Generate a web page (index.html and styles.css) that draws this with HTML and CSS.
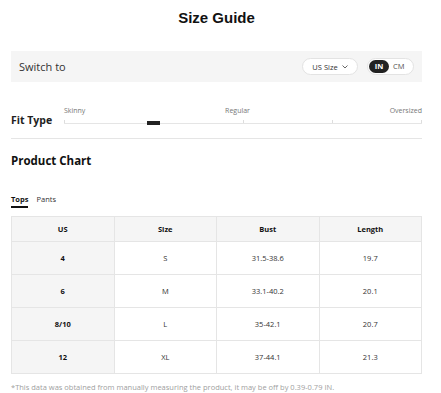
FILE: index.html
```html
<!DOCTYPE html>
<html>
<head>
<meta charset="utf-8">
<link rel="stylesheet" href="styles.css">
</head>
<body>
<div class="page">
  <h1 class="title">Size Guide</h1>
  <div class="switch-bar">
    <span class="switch-label">Switch to</span>
    <div class="switch-controls">
      <div class="select-pill">US Size
        <svg class="chev" width="6" height="4" viewBox="0 0 6 4"><polyline points="0.5,0.5 3,3 5.5,0.5" fill="none" stroke="#555" stroke-width="0.9"/></svg>
      </div>
      <div class="unit-toggle">
        <span class="unit active">IN</span>
        <span class="unit">CM</span>
      </div>
    </div>
  </div>

  <div class="fit-row">
    <div class="fit-label">Fit Type</div>
    <div class="slider">
      <div class="slider-labels">
        <span>Skinny</span>
        <span>Regular</span>
        <span>Oversized</span>
      </div>
      <div class="track">
        <span class="tick t0"></span>
        <span class="tick t50"></span>
        <span class="tick t75"></span>
        <span class="tick t100"></span>
        <span class="thumb"></span>
      </div>
    </div>
  </div>

  <h2 class="chart-title">Product Chart</h2>
  <div class="tabs">
    <span class="tab active">Tops</span>
    <span class="tab">Pants</span>
  </div>

  <table class="chart">
    <thead>
      <tr><th>US</th><th>Size</th><th>Bust</th><th>Length</th></tr>
    </thead>
    <tbody>
      <tr><td class="key">4</td><td>S</td><td>31.5-38.6</td><td>19.7</td></tr>
      <tr><td class="key">6</td><td>M</td><td>33.1-40.2</td><td>20.1</td></tr>
      <tr><td class="key">8/10</td><td>L</td><td>35-42.1</td><td>20.7</td></tr>
      <tr><td class="key">12</td><td>XL</td><td>37-44.1</td><td>21.3</td></tr>
    </tbody>
  </table>
  <p class="note">*This data was obtained from manually measuring the product, it may be off by 0.39-0.79 IN.</p>
</div>
</body>
</html>
```

FILE: styles.css
```css
* { box-sizing: border-box; }
body {
  margin: 0;
  font-family: "Open Sans", "Noto Sans", sans-serif;
  color: #222;
  background: #fff;
}
.page {
  padding: 0 19px 0 11px;
}
.title {
  margin: 0;
  padding-top: 8px;
  height: 51px;
  text-align: center;
  font-family: "Liberation Sans", Arial, sans-serif;
  font-weight: bold;
  font-size: 15px;
  line-height: 20px;
  color: #111;
}
.switch-bar {
  height: 31px;
  background: #f5f5f5;
  display: flex;
  align-items: center;
  justify-content: space-between;
  padding: 0 8px;
}
.switch-label {
  font-size: 11px;
  color: #333;
}
.switch-controls {
  display: flex;
  align-items: center;
  gap: 9px;
}
.select-pill {
  width: 56px;
  height: 17px;
  border: 1px solid #e3e3e3;
  border-radius: 9px;
  background: #fff;
  font-size: 7.5px;
  color: #333;
  display: flex;
  align-items: center;
  justify-content: center;
  gap: 4px;
}
.chev { display: block; }
.unit-toggle {
  width: 47px;
  height: 17px;
  border: 1px solid #e3e3e3;
  border-radius: 9px;
  background: #fff;
  display: flex;
  align-items: center;
  padding: 0 1px;
  gap: 4px;
}
.unit {
  font-size: 7.5px;
  color: #555;
  line-height: 13px;
}
.unit.active {
  background: #222;
  color: #fff;
  font-weight: bold;
  border-radius: 7px;
  width: 20px;
  text-align: center;
}
.fit-row {
  display: flex;
  align-items: flex-end;
  margin-top: 24px;
  padding-bottom: 12px;
  border-bottom: 1px solid #e5e5e5;
}
.fit-label {
  width: 53px;
  font-size: 10.5px;
  font-weight: bold;
  line-height: 14px;
  color: #222;
  margin-bottom: -1px;
}
.slider {
  flex: 1;
}
.slider-labels {
  display: flex;
  justify-content: space-between;
  font-size: 7px;
  line-height: 10px;
  color: #777;
}
.track {
  position: relative;
  height: 10px;
}
.track::before {
  content: "";
  position: absolute;
  left: 0;
  right: 0;
  top: 7px;
  height: 1px;
  background: #e5e5e5;
}
.tick {
  position: absolute;
  top: 4px;
  width: 1px;
  height: 3px;
  background: #ddd;
}
.t0 { left: 0; }
.t50 { left: 179px; }
.t75 { left: 268px; }
.t100 { right: 0; }
.thumb {
  position: absolute;
  left: 83px;
  top: 5px;
  width: 13px;
  height: 4px;
  background: #222;
}
.chart-title {
  margin: 14px 0 0;
  font-size: 11.5px;
  line-height: 16px;
  font-weight: bold;
  color: #111;
}
.tabs {
  margin-top: 25px;
  display: flex;
  gap: 8px;
  height: 14px;
}
.tab {
  font-size: 7.5px;
  line-height: 11px;
  color: #333;
}
.tab.active {
  font-weight: bold;
  color: #111;
  border-bottom: 2px solid #111;
  padding-bottom: 1px;
}
.chart {
  margin-top: 8px;
  width: 100%;
  table-layout: fixed;
  border-collapse: collapse;
  border: 1px solid #e5e5e5;
}
.chart th, .chart td {
  border: 1px solid #e5e5e5;
  text-align: center;
  padding: 0;
  font-size: 7.5px;
  color: #333;
}
.chart th {
  height: 25px;
  background: #f5f5f5;
  font-weight: bold;
  color: #111;
}
.chart td {
  height: 33px;
}
.chart td.key {
  background: #f5f5f5;
  font-weight: bold;
  color: #111;
}
.note {
  margin: 8px 0 0;
  font-size: 7.5px;
  line-height: 10px;
  color: #a0a0a0;
}
```
